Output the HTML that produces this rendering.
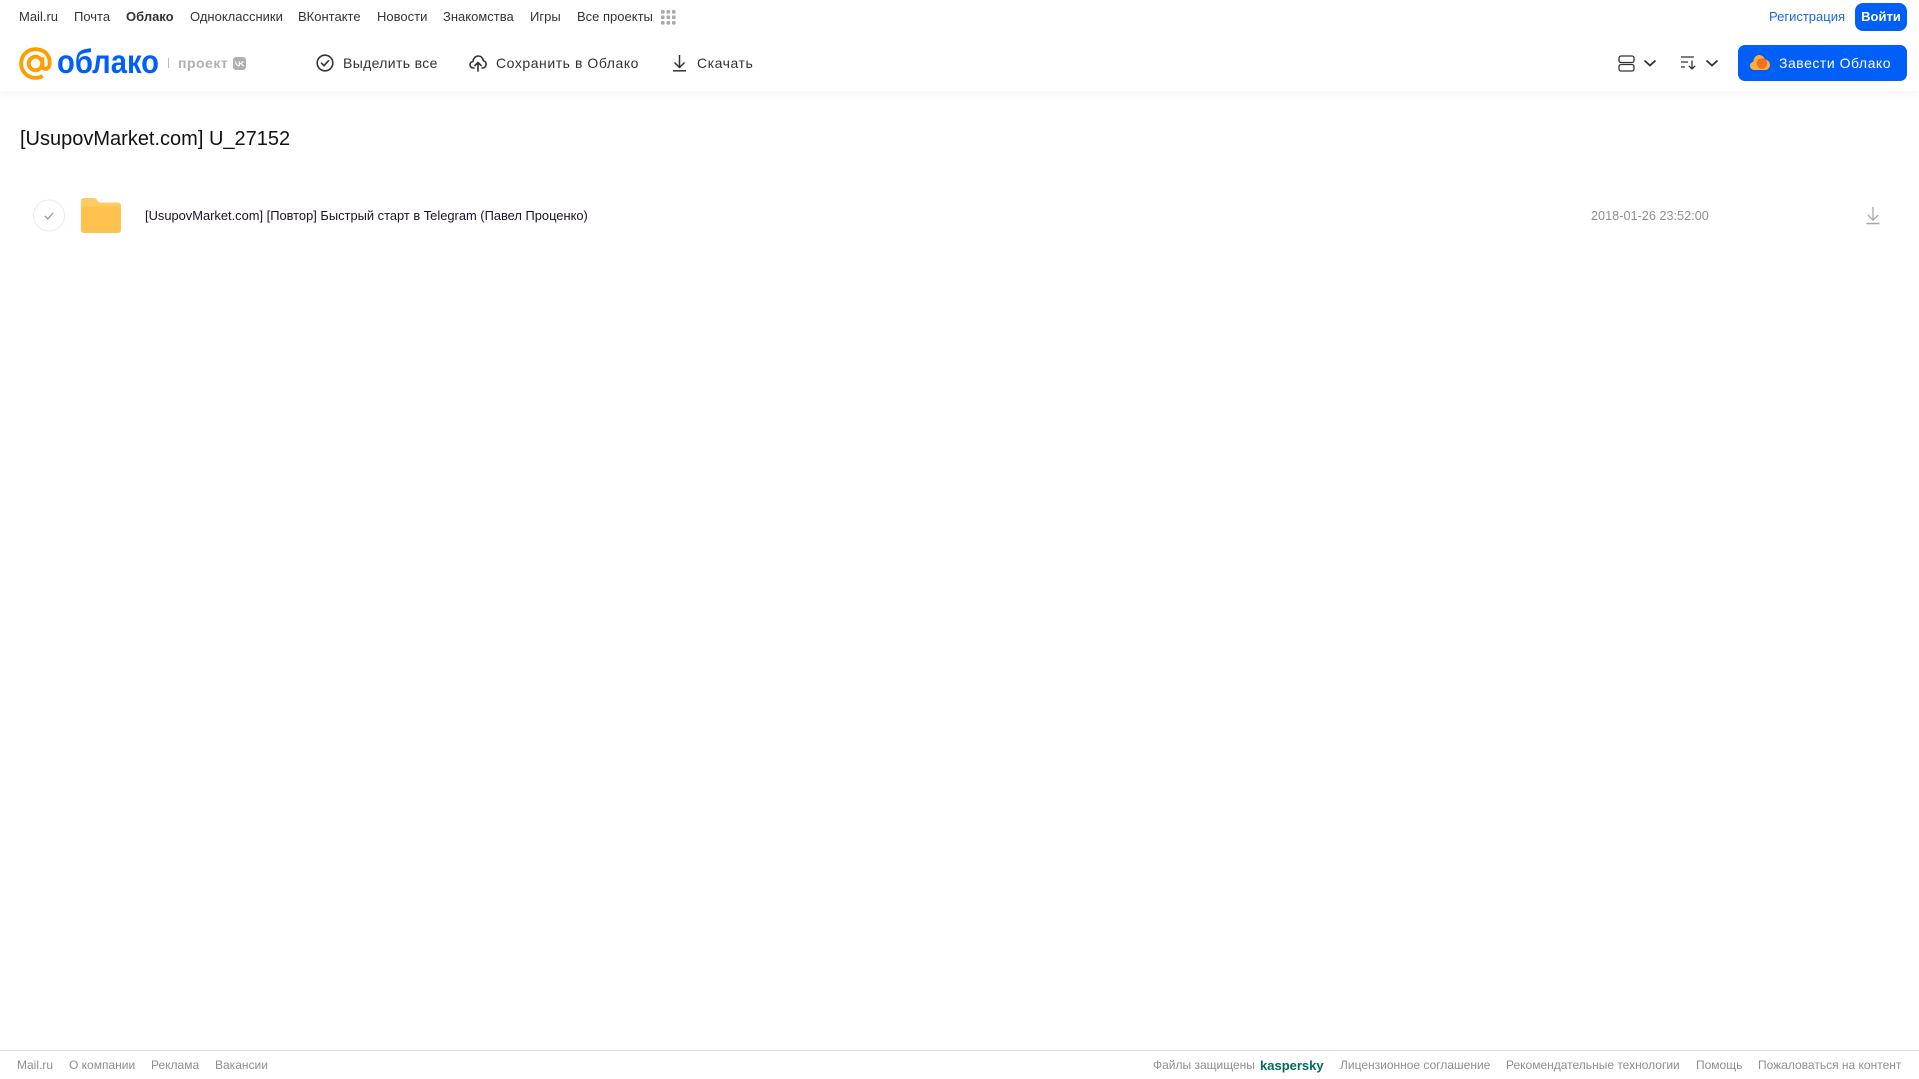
<!DOCTYPE html>
<html lang="ru">
<head>
<meta charset="utf-8">
<title>[UsupovMarket.com] U_27152</title>
<style>
html,body{margin:0;padding:0;background:#fff}
body{position:relative;width:1919px;height:1079px;overflow:hidden;font-family:"Liberation Sans",Arial,sans-serif}
a,span,h1,div.t{position:absolute;white-space:nowrap;text-decoration:none;margin:0}
svg{position:absolute;display:block}
header{position:absolute;left:0;top:0;width:1919px;height:91px;background:#fff;box-shadow:0 2px 10px rgba(0,0,0,.05)}
.n{top:8px;font-size:13px;line-height:17px;color:#333}
.a{top:54px;font-size:14px;line-height:18px;color:#333;letter-spacing:.35px}
.f{top:1058px;font-size:12px;line-height:15px;color:#8f8f8f}
footer{position:absolute;left:0;top:1050px;width:1919px;height:29px;border-top:1px solid #d6d6d6;box-sizing:border-box}
</style>
</head>
<body>
<header>
<a class="n" style="left:19px">Mail.ru</a>
<a class="n" style="left:74px">Почта</a>
<a class="n" style="left:126px;font-weight:bold">Облако</a>
<a class="n" style="left:190px">Одноклассники</a>
<a class="n" style="left:298px">ВКонтакте</a>
<a class="n" style="left:377px">Новости</a>
<a class="n" style="left:443px">Знакомства</a>
<a class="n" style="left:530px">Игры</a>
<a class="n" style="left:577px">Все проекты</a>
<svg style="left:661px;top:10px" width="15" height="15" fill="#a9a9a9">
<rect x="0" y="0" width="3.6" height="3.6" rx="1"/><rect x="5.5" y="0" width="3.6" height="3.6" rx="1"/><rect x="11" y="0" width="3.6" height="3.6" rx="1"/>
<rect x="0" y="5.5" width="3.6" height="3.6" rx="1"/><rect x="5.5" y="5.5" width="3.6" height="3.6" rx="1"/><rect x="11" y="5.5" width="3.6" height="3.6" rx="1"/>
<rect x="0" y="11" width="3.6" height="3.6" rx="1"/><rect x="5.5" y="11" width="3.6" height="3.6" rx="1"/><rect x="11" y="11" width="3.6" height="3.6" rx="1"/>
</svg>
<a class="n" style="left:1769px;color:#1a68e0">Регистрация</a>
<a style="left:1855px;top:3px;width:52px;height:28px;background:#005ff9;border-radius:8px;color:#fff;font-size:13px;font-weight:bold;line-height:27px;text-align:center">Войти</a>

<svg style="left:19px;top:47px" width="33" height="33" viewBox="0 0 34 34" fill="none" stroke="#ff9e00" stroke-width="4">
<circle cx="17" cy="17" r="7"/>
<path d="M24 10.500v8.500c0 5 6.800 5 7.500-1C32.500 8 25.500 2.200 17 2.200 8.700 2.200 2.200 8.700 2.200 17S8.700 31.800 17 31.800c3 0 5.500-.7 7.500-2"/>
</svg>
<span style="left:57px;top:41px;font-size:33px;line-height:42px;font-weight:bold;color:#005ff9;transform:scaleX(.885);transform-origin:0 50%">облако</span>
<span style="left:168px;top:58px;width:1px;height:10px;background:#bdbdbd"></span>
<span style="left:178px;top:54px;font-size:14px;line-height:18px;font-weight:bold;color:#b0b0b0;letter-spacing:.5px">проект</span>
<svg style="left:233px;top:57px" width="13" height="13"><rect width="13" height="13" rx="3" fill="#b0b0b0"/><path d="M2.500 4.500c.2 2.800 1.500 4.300 3.800 4.300V4.500M10.500 4.500 7.800 6.500l3 2.500M6.300 6.600h1.500" fill="none" stroke="#fff" stroke-width="1.100"/></svg>

<svg style="left:316px;top:54px" width="18" height="18" fill="none" stroke="#333" stroke-width="1.600"><circle cx="9" cy="9" r="7.800"/><path d="M5.500 9.200l2.500 2.500 4.500-5" stroke-linecap="round" stroke-linejoin="round"/></svg>
<a class="a" style="left:343px">Выделить все</a>
<svg style="left:469px;top:54px" width="18" height="18" fill="none" stroke="#333" stroke-width="1.600" stroke-linecap="round" stroke-linejoin="round"><path d="M5 14H4.200C2.300 14 1 12.500 1 10.800c0-1.700 1.200-3 2.800-3.200C4.300 4.300 6.500 2 9.200 2c2.700 0 4.800 2 5.200 4.700 1.600.4 2.700 1.900 2.700 3.600 0 2-1.500 3.700-3.500 3.700H13"/><path d="M9 17V9M6 11.500 9 8.500l3 3"/></svg>
<a class="a" style="left:496px;letter-spacing:.55px">Сохранить в Облако</a>
<svg style="left:672px;top:54px" width="15" height="18" fill="none" stroke="#333" stroke-width="1.500"><path d="M7.500 1v12M2.500 8.500l5 5 5-5"/><path d="M1 16.800h13"/></svg>
<a class="a" style="left:697px;letter-spacing:.55px">Скачать</a>

<svg style="left:1618px;top:55px" width="17" height="17" fill="none" stroke="#333" stroke-width="1.300"><rect x="1" y="1" width="15" height="6.500" rx="2"/><rect x="1" y="9.500" width="15" height="6.500" rx="2"/></svg>
<svg style="left:1643px;top:59px" width="14" height="9" fill="none" stroke="#333" stroke-width="1.800"><path d="M1.500 1.500 7 6.500l5.500-5"/></svg>
<svg style="left:1680px;top:55px" width="18" height="16" fill="none" stroke="#333" stroke-width="1.300"><path d="M1 2h13M1 7h7M1 12h4"/><path d="M12 5.500V14M8.800 10.800 12 14l3.200-3.200"/></svg>
<svg style="left:1705px;top:59px" width="14" height="9" fill="none" stroke="#333" stroke-width="1.800"><path d="M1.500 1.500 7 6.500l5.500-5"/></svg>

<a style="left:1738px;top:45px;width:169px;height:36px;background:#005ff9;border-radius:7px"></a>
<svg style="left:1750px;top:54px" width="20" height="17"><path d="M4.500 16C2 16 0 14.200 0 11.800c0-2 1.400-3.700 3.300-4.100C3.800 3.500 6.500 1 9 1c2.800 0 5 1.800 5.800 4.400 2.900.3 5.200 2.600 5.200 5.500 0 2.900-2.300 5.100-5 5.100z" fill="#ffb03a"/><circle cx="12" cy="9.500" r="5.300" fill="#f4701e"/></svg>
<a style="left:1779px;top:54px;font-size:14px;line-height:18px;color:#fff;letter-spacing:.52px">Завести Облако</a>
</header>

<h1 style="left:20px;top:126px;font-size:20px;line-height:26px;font-weight:normal;color:#111">[UsupovMarket.com] U_27152</h1>

<svg style="left:33px;top:199px" width="32" height="33" fill="none"><circle cx="16" cy="16.500" r="15.500" stroke="#ececec"/><path d="M11.800 17l3 3 5.500-6.500" stroke="#999" stroke-width="1.300"/></svg>
<svg style="left:81px;top:197px" width="40" height="36"><path d="M0 4a3 3 0 0 1 3-3h9.500c2 0 3 1 4 2.500L18 5.500h19a3 3 0 0 1 3 3V33a3 3 0 0 1-3 3H3a3 3 0 0 1-3-3z" fill="#ffcb62"/><path d="M0 9.500V33a3 3 0 0 0 3 3h34a3 3 0 0 0 3-3V9.500z" fill="#ffc24f"/></svg>
<a style="left:145px;top:208px;font-size:12.88px;line-height:16px;color:#1d1028">[UsupovMarket.com] [Повтор] Быстрый старт в Telegram (Павел Проценко)</a>
<span style="left:1591px;top:208px;font-size:12.7px;line-height:16px;color:#8f8f8f">2018-01-26 23:52:00</span>
<svg style="left:1866px;top:207px" width="14" height="18" fill="none" stroke="#a9a9a9" stroke-width="1.300"><path d="M7 0v13M1.800 8l5.200 5.200L12.200 8"/><path d="M.5 16.500h13" stroke-width="1.600"/></svg>

<footer></footer>
<a class="f" style="left:17px">Mail.ru</a>
<a class="f" style="left:69px">О компании</a>
<a class="f" style="left:151px">Реклама</a>
<a class="f" style="left:215px">Вакансии</a>
<a class="f" style="left:1153px">Файлы защищены</a>
<a class="f" style="left:1260px;color:#006d5c;font-weight:bold;font-size:13px">kaspersky</a>
<a class="f" style="left:1340px">Лицензионное соглашение</a>
<a class="f" style="left:1506px">Рекомендательные технологии</a>
<a class="f" style="left:1696px">Помощь</a>
<a class="f" style="left:1758px">Пожаловаться на контент</a>
</body>
</html>
